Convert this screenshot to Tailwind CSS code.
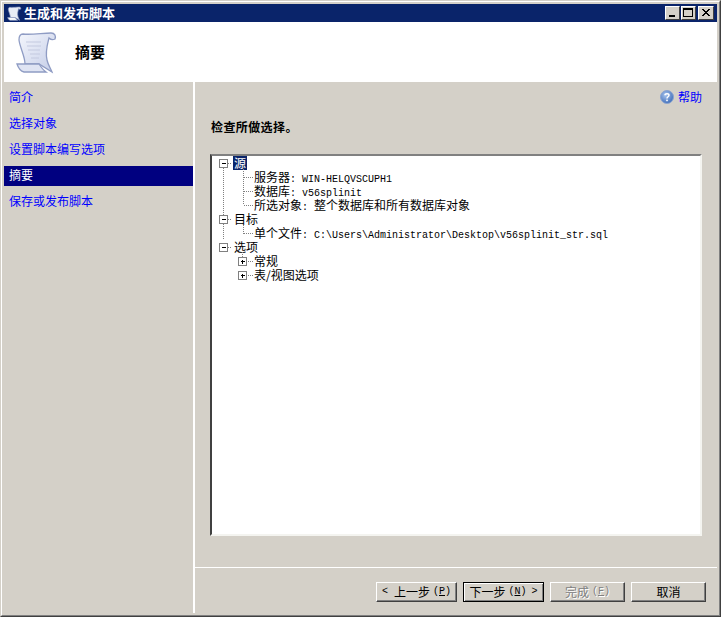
<!DOCTYPE html>
<html lang="zh-CN">
<head>
  <meta charset="UTF-8">
  <title>生成和发布脚本</title>
  <script src="https://cdn.jsdelivr.net/npm/@tailwindcss/browser@4"></script>
</head>
<body class="bg-[#d4d0c8] overflow-hidden font-['Noto_Sans_CJK_SC',sans-serif] text-[12px] leading-[14px] text-black">
  <!-- Window frame -->
  <div class="w-[721px] h-[617px] border border-[#d4d0c8] border-r-[#404040] border-b-[#404040]">
    <div class="h-full border border-white border-r-[#808080] border-b-[#808080] p-[2px] flex flex-col">

      <!-- Title bar -->
      <div class="h-[18px] bg-[#0a246a] flex items-center pl-[3px] pr-[3px] shrink-0">
        <svg width="15" height="15" viewBox="0 0 44 44" class="mr-[2px]">
          <path d="M4 10C4 6 6 4 8 4 16 5 28 3 36 3c4 0 5 3 4 6-2 1-4 1-6-1-2 8-4 14-2 22 1 5 4 9 5 12L24 34H10C10 26 5 18 4 10z" fill="#e8ecf6" stroke="#8a98c0" stroke-width="2"/>
          <path d="M2 34h22c2 3 4 6 7 8H9C5 41 3 37 2 34z" fill="#ffffff" stroke="#8a98c0" stroke-width="2"/>
        </svg>
        <span class="text-white font-bold text-[13px]">生成和发布脚本</span>
        <div class="ml-auto flex">
          <div class="w-[15px] h-[14px] bg-[#d4d0c8] border border-white border-r-[#404040] border-b-[#404040] flex items-end pl-[3px] pb-[2px]">
            <div class="w-[6px] h-[2px] bg-black"></div>
          </div>
          <div class="w-[15px] h-[14px] ml-[1px] bg-[#d4d0c8] border border-white border-r-[#404040] border-b-[#404040] p-[1px]">
            <div class="w-[10px] h-[9px] border border-black border-t-2"></div>
          </div>
          <div class="w-[16px] h-[14px] ml-[2px] bg-[#d4d0c8] border border-white border-r-[#404040] border-b-[#404040]">
            <svg width="14" height="12" viewBox="0 0 14 12"><path d="M3 2l7 7M4 2l7 7M10 2L3 9M11 2L4 9" stroke="#000" fill="none"/></svg>
          </div>
        </div>
      </div>

      <!-- Header -->
      <div class="h-[60px] bg-white flex items-center shrink-0">
        <svg width="44" height="44" viewBox="0 0 44 44" class="ml-[11px]">
          <defs>
            <linearGradient id="scroll" x1="0" y1="0" x2="1" y2="1">
              <stop offset="0" stop-color="#f4f6fc"/>
              <stop offset="1" stop-color="#c4cde8"/>
            </linearGradient>
          </defs>
          <path d="M4 10C4 6 6 4 8 4 16 5 28 3 36 3c4 0 5 3 4 6-2 1-4 1-6-1-2 8-4 14-2 22 1 5 4 9 5 12L24 34H10C10 26 5 18 4 10z" fill="url(#scroll)" stroke="#8f9cc4" stroke-width="1.3"/>
          <path d="M11 12h15M12 16h14M13 20h12M15 24h10M16 28h8" stroke="#c3c9df" stroke-width="1.1"/>
          <path d="M2 34h22c2 3 4 6 7 8H9C5 41 3 37 2 34z" fill="#dfe4f3" stroke="#8f9cc4" stroke-width="1.3"/>
        </svg>
        <span class="ml-[16px] font-bold text-[15px]">摘要</span>
      </div>

      <div class="flex-1 flex min-h-0">
        <!-- Left nav -->
        <div class="w-[191px] shrink-0 border-r-2 border-white flex flex-col gap-[6px] pt-[6px] pr-0">
          <div class="h-[20px] px-[5px] pb-[2px] flex items-center text-[#0000ff]">简介</div>
          <div class="h-[20px] px-[5px] pb-[2px] flex items-center text-[#0000ff]">选择对象</div>
          <div class="h-[20px] px-[5px] pb-[2px] flex items-center text-[#0000ff]">设置脚本编写选项</div>
          <div class="h-[20px] px-[5px] pb-[2px] flex items-center bg-[#000080] text-white">摘要</div>
          <div class="h-[20px] px-[5px] pb-[2px] flex items-center text-[#0000ff]">保存或发布脚本</div>
        </div>

        <!-- Right pane -->
        <div class="flex-1 flex flex-col min-w-0">
          <div class="h-[486px] px-[15px] border-b border-white shrink-0 flex flex-col">
            <div class="flex items-center justify-end h-[16px] mt-[7px] gap-[4px]">
              <svg width="14" height="14" viewBox="0 0 14 14">
                <defs>
                  <radialGradient id="help" cx="0.4" cy="0.35" r="0.8">
                    <stop offset="0" stop-color="#a8c4ec"/>
                    <stop offset="1" stop-color="#2a5cb0"/>
                  </radialGradient>
                </defs>
                <circle cx="7" cy="7" r="6.5" fill="url(#help)" stroke="#8aa4d0"/>
                <path d="M5 5.3C5 3.2 9 3.2 9 5.3 9 6.8 7 6.8 7 8.5" fill="none" stroke="#fff" stroke-width="1.5"/>
                <rect x="6.2" y="9.6" width="1.6" height="1.6" fill="#fff"/>
              </svg>
              <span class="text-[#0000ff]">帮助</span>
            </div>
            <div class="mt-[15px] h-[14px] pl-[1px] font-bold tracking-[0.4px]">检查所做选择。</div>

            <!-- Summary tree -->
            <div class="relative mt-[20px] w-[492px] h-[382px] bg-white border-2 border-[#808080] border-l-[#404040] border-r-[#f4f4f0] border-b-[#f4f4f0]">
              <svg class="absolute left-0 top-0" width="60" height="130" shape-rendering="crispEdges">
                <g stroke="#808080" stroke-dasharray="1 1" fill="none">
                  <path d="M11.5 12V84M16 7.5h4M16 63.5h4M16 91.5h4"/>
                  <path d="M31.5 9V49M32 21.5h9M32 35.5h9M32 49.5h9"/>
                  <path d="M31.5 69V78M32 77.5h9"/>
                  <path d="M30.5 96V101M36 105.5h5M36 119.5h5"/>
                </g>
                <g fill="#fff" stroke="#808080">
                  <rect x="7.5" y="3.5" width="8" height="8"/>
                  <rect x="7.5" y="59.5" width="8" height="8"/>
                  <rect x="7.5" y="87.5" width="8" height="8"/>
                  <rect x="26.5" y="101.5" width="8" height="8"/>
                  <rect x="26.5" y="115.5" width="8" height="8"/>
                </g>
                <path d="M9.5 7.5h4M9.5 63.5h4M9.5 91.5h4M28.5 105.5h4M30.5 103.5v4M28.5 119.5h4M30.5 117.5v4" stroke="#000" fill="none"/>
              </svg>
              <div class="h-[14px] pl-[21px]"><span class="inline-block h-[14px] px-[1px] bg-[#0a246a] text-white">源</span></div>
              <div class="h-[14px] pl-[42px] whitespace-nowrap">服务器<span class="font-['Liberation_Mono',monospace] text-[10px]">: WIN-HELQVSCUPH1</span></div>
              <div class="h-[14px] pl-[42px] whitespace-nowrap">数据库<span class="font-['Liberation_Mono',monospace] text-[10px]">: v56splinit</span></div>
              <div class="h-[14px] pl-[42px] whitespace-nowrap">所选对象<span class="font-['Liberation_Mono',monospace] text-[10px]">: </span>整个数据库和所有数据库对象</div>
              <div class="h-[14px] pl-[22px]">目标</div>
              <div class="h-[14px] pl-[42px] whitespace-nowrap">单个文件<span class="font-['Liberation_Mono',monospace] text-[10px]">: C:\Users\Administrator\Desktop\v56splinit_str.sql</span></div>
              <div class="h-[14px] pl-[22px]">选项</div>
              <div class="h-[14px] pl-[42px]">常规</div>
              <div class="h-[14px] pl-[42px]">表/视图选项</div>
            </div>
          </div>

          <!-- Wizard buttons -->
          <div class="flex-1 flex justify-end items-start gap-[6px] pt-[14px] pr-[11px]">
            <button class="w-[81px] h-[20px] bg-[#d4d0c8] border border-white border-r-[#404040] border-b-[#404040] shadow-[inset_-1px_-1px_0_#808080] flex items-center justify-center whitespace-nowrap"><span class="font-['Liberation_Mono',monospace] text-[10px] mr-[6px]">&lt;</span>上一步<span class="font-['Liberation_Mono',monospace] text-[10px] ml-[3px]">(<span class="underline">P</span>)</span></button>
            <button class="w-[81px] h-[20px] bg-[#d4d0c8] border border-black shadow-[inset_1px_1px_0_#fff,inset_-1px_-1px_0_#808080] flex items-center justify-center whitespace-nowrap">下一步<span class="font-['Liberation_Mono',monospace] text-[10px] ml-[3px]">(<span class="underline">N</span>)<span class="ml-[5px]">&gt;</span></span></button>
            <button class="w-[75px] h-[20px] bg-[#d4d0c8] border border-white border-r-[#404040] border-b-[#404040] shadow-[inset_-1px_-1px_0_#808080] flex items-center justify-center whitespace-nowrap text-[#808080] [text-shadow:1px_1px_0_#fff]">完成<span class="font-['Liberation_Mono',monospace] text-[10px] ml-[3px]">(<span class="underline">F</span>)</span></button>
            <button class="w-[75px] h-[20px] bg-[#d4d0c8] border border-white border-r-[#404040] border-b-[#404040] shadow-[inset_-1px_-1px_0_#808080] flex items-center justify-center">取消</button>
          </div>
        </div>
      </div>
    </div>
  </div>
</body>
</html>
